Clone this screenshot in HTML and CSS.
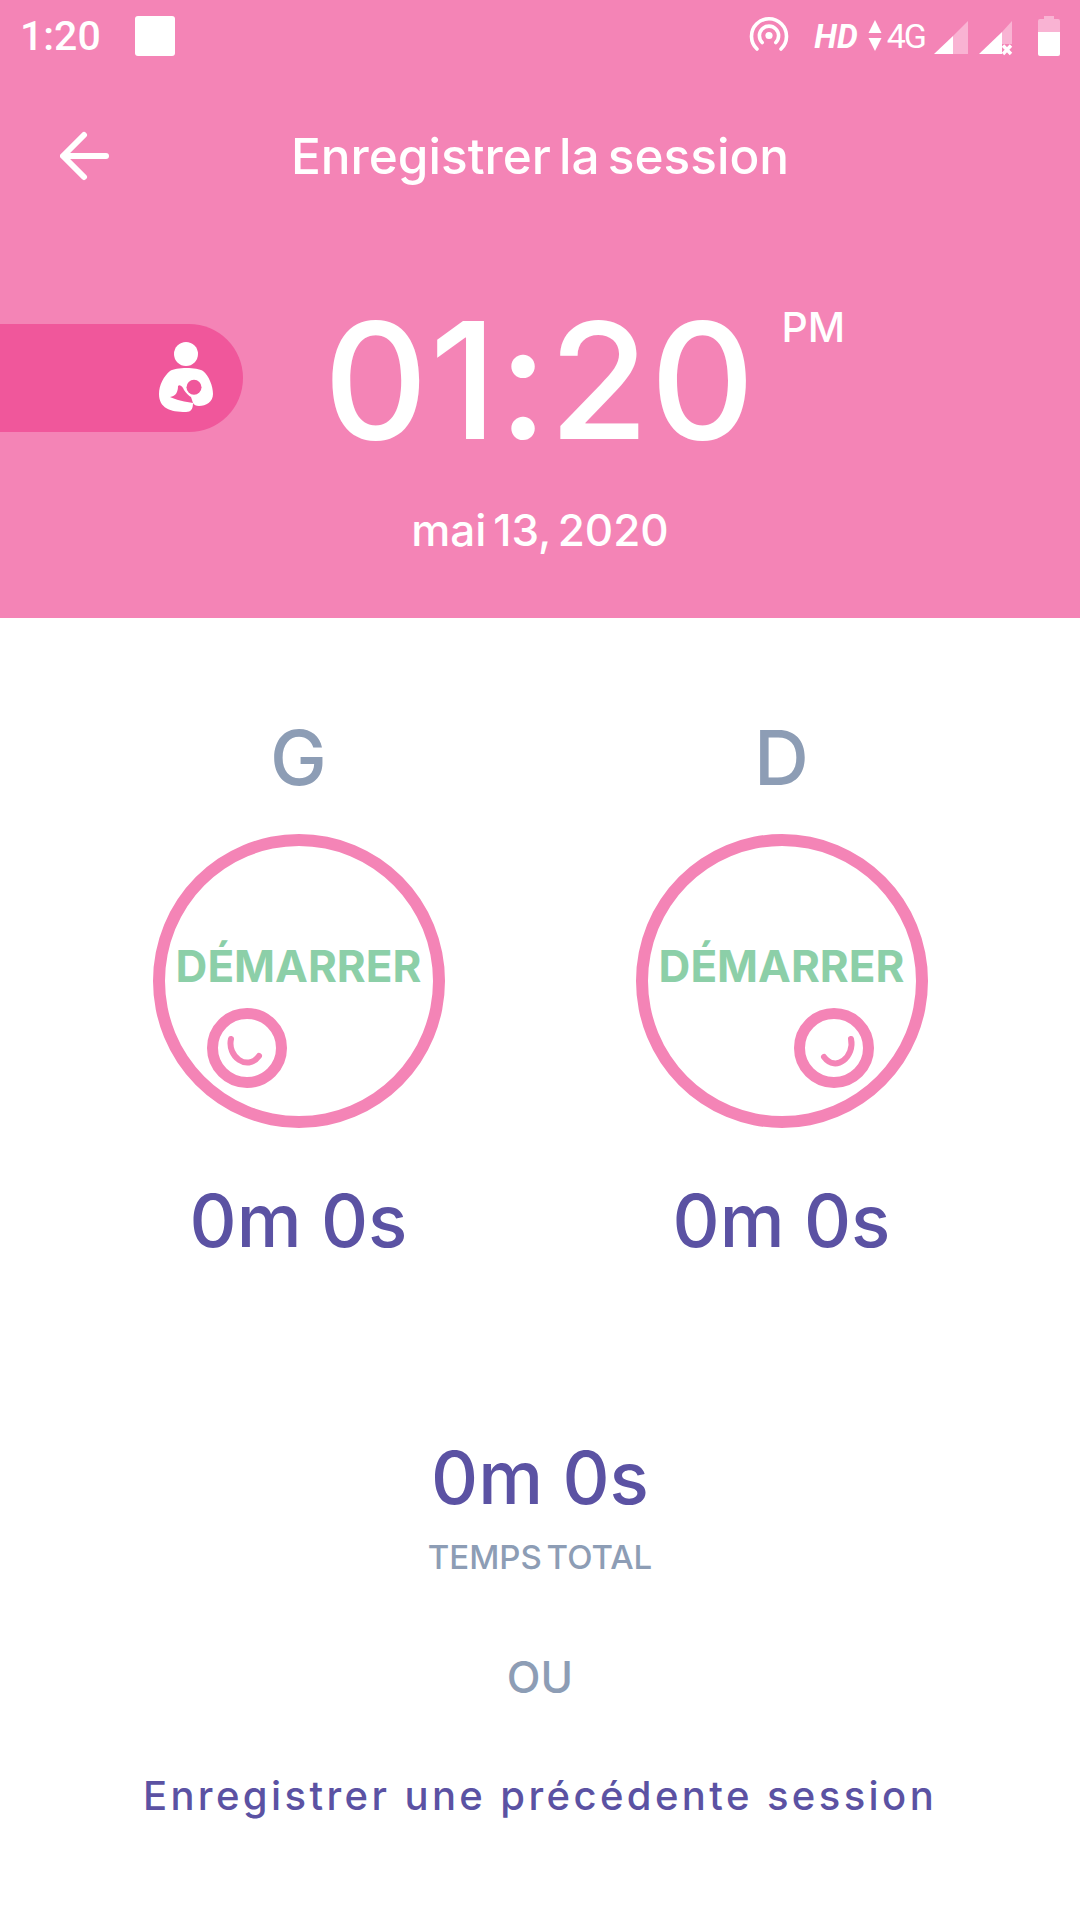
FILE: index.html
```html
<!DOCTYPE html>
<html lang="fr">
<head>
  <meta charset="UTF-8" />
  <meta name="viewport" content="width=device-width, initial-scale=1.0"/>
  <title>Enregistrer la session</title>
  <link rel="stylesheet" href="styles.css">
</head>
<body>
  <header class="header">
    <div class="status">
      <span class="clock">1:20</span>
      <span class="notif"></span>
      <span class="status-right">
        <svg class="hotspot" width="40" height="40" viewBox="0 0 40 40" fill="none" stroke="#fff" stroke-width="3.6" stroke-linecap="round">
          <path d="M8 33A17.5 17.5 0 1 1 32 33"/>
          <path d="M13.2 26.5A9.6 9.6 0 1 1 26.8 26.5"/>
          <circle cx="20" cy="19.5" r="3.6" fill="#fff" stroke="none"/>
        </svg>
        <span class="hd">HD</span>
        <svg class="updown" width="14" height="32" viewBox="0 0 14 32" fill="#fff">
          <path d="M7 0L13.5 13H.5z"/>
          <path d="M.5 18h13L7 31z"/>
        </svg>
        <span class="net">4G</span>
        <svg class="signal" width="35" height="35" viewBox="0 0 35 35">
          <path d="M34 0V33H19V15z" fill="#f9b3d3"/>
          <path d="M0 33L19 15V33z" fill="#fff"/>
        </svg>
        <svg class="signal two" width="35" height="35" viewBox="0 0 35 35">
          <path d="M33 0L23 11V23H33z" fill="#f9b3d3"/>
          <path d="M0 33L23 11V33z" fill="#fff"/>
          <path d="M24 24.500L32 33M32 24.500L24 33" stroke="#fff" stroke-width="3.4"/>
        </svg>
        <svg class="battery" width="24" height="40" viewBox="0 0 24 40">
          <path d="M7 0h10v3h4a2 2 0 0 1 2 2v12H1V5a2 2 0 0 1 2-2h4z" fill="#f9b3d3"/>
          <path d="M1 16h22v22a2 2 0 0 1-2 2H3a2 2 0 0 1-2-2z" fill="#fff"/>
        </svg>
      </span>
    </div>

    <div class="toolbar">
      <svg class="back" width="50" height="50" viewBox="0 0 50 50" fill="none" stroke="#fff" stroke-width="6" stroke-linecap="round" stroke-linejoin="round">
        <path d="M24 4L3 25L24 46"/>
        <path d="M4 25H46"/>
      </svg>
      <h1>Enregistrer la session</h1>
    </div>

    <div class="time-row">
      <div class="pill">
        <svg width="60" height="72" viewBox="0 0 60 72" fill="#fff">
          <circle cx="30" cy="12" r="12"/>
          <path d="M14 29C20 25 41 25 47 29C53 34 57 44 57 52C57 60 50 64 43 64C40 64 38 63 37 61C37 67 35 70 30 70C14 70 3 66 3 52C3 43 8 34 14 29z"/>
          <circle cx="38" cy="45.300" r="7.500" fill="#f0579b"/>
          <path d="M14 55C20 54 22 50 22 44C24 42 27 45 28 48C30 51 33 54 35 55L37 61C30 60 20 58 14 55z" fill="#f0579b"/>
        </svg>
      </div>
      <div class="time">01:20</div>
      <div class="ampm">PM</div>
    </div>
    <div class="date">mai 13, 2020</div>
  </header>

  <main class="main">
    <div class="sides">
      <div class="side">
        <div class="letter">G</div>
        <div class="ring">
          <span class="start">DÉMARRER</span>
          <svg class="face left" width="80" height="80" viewBox="0 0 80 80" fill="none" stroke="#f484b6">
            <circle cx="40" cy="40" r="34.500" stroke-width="11"/>
            <path d="M24 31C20 48 40 64 52 48" stroke-width="6" stroke-linecap="round"/>
          </svg>
        </div>
        <div class="duration">0m 0s</div>
      </div>
      <div class="side">
        <div class="letter">D</div>
        <div class="ring">
          <span class="start">DÉMARRER</span>
          <svg class="face right" width="80" height="80" viewBox="0 0 80 80" fill="none" stroke="#f484b6">
            <circle cx="40" cy="40" r="34.500" stroke-width="11"/>
            <path d="M57 31C61 48 42 65 30 49" stroke-width="6" stroke-linecap="round"/>
          </svg>
        </div>
        <div class="duration">0m 0s</div>
      </div>
    </div>

    <div class="total">
      <div class="duration">0m 0s</div>
      <div class="total-label">TEMPS TOTAL</div>
    </div>
    <div class="or">OU</div>
    <a class="previous">Enregistrer une précédente session</a>
  </main>
</body>
</html>
```

FILE: styles.css
```css
* {
  box-sizing: border-box;
}
body {
  margin: 0;
  width: 1080px;
  height: 1920px;
  overflow: hidden;
  background: #fff;
  font-family: "Inter", "Noto Sans", sans-serif;
}
.header {
  height: 618px;
  background: #f484b6;
  color: #fff;
}
.status {
  height: 72px;
  display: flex;
  align-items: center;
  padding: 0 19px 0 20px;
}
.clock {
  font-family: Roboto, sans-serif;
  font-size: 41px;
  font-weight: 500;
}
.notif {
  width: 40px;
  height: 40px;
  margin-left: 34px;
  background: #fff;
  border-radius: 3px;
}
.status-right {
  margin-left: auto;
  display: flex;
  align-items: center;
}
.hd {
  font-family: Roboto, sans-serif;
  font-style: italic;
  font-weight: 700;
  font-size: 33px;
  margin-left: 25px;
}
.updown {
  margin-left: 10px;
}
.net {
  font-family: Roboto, sans-serif;
  font-size: 34px;
  letter-spacing: -2px;
  margin-left: 5px;
}
.signal {
  margin-left: 9px;
  margin-top: 4px;
}
.signal.two {
  margin-left: 10px;
}
.battery {
  margin-left: 23px;
}
.toolbar {
  height: 168px;
  display: flex;
  align-items: center;
  position: relative;
  padding-left: 60px;
}
.toolbar h1 {
  position: absolute;
  left: 0;
  right: 0;
  margin: 0;
  text-align: center;
  font-size: 49.5px;
  font-weight: 500;
  word-spacing: -5px;
}
.time-row {
  display: grid;
  grid-template-columns: 1fr auto 1fr;
  align-items: center;
  margin-top: 81px;
  height: 108px;
}
.pill {
  width: 243px;
  height: 108px;
  background: #f0579b;
  border-radius: 0 54px 54px 0;
  display: flex;
  align-items: center;
  justify-content: flex-end;
  padding-right: 27px;
}
.time {
  font-size: 162px;
  font-weight: 500;
  letter-spacing: 1.5px;
  line-height: 108px;
  margin-top: 5px;
}
.ampm {
  align-self: start;
  font-size: 41px;
  font-weight: 500;
  margin-left: 25px;
  margin-top: -19px;
}
.date {
  text-align: center;
  font-size: 44px;
  font-weight: 500;
  word-spacing: -5px;
  margin-top: 74px;
}
.sides {
  display: grid;
  grid-template-columns: 1fr 1fr;
  padding: 0 57px;
  margin-top: 96px;
}
.side {
  display: flex;
  flex-direction: column;
  align-items: center;
}
.letter {
  font-size: 76px;
  font-weight: 500;
  line-height: 86px;
  color: #8d9db5;
}
.ring {
  position: relative;
  width: 292px;
  height: 294px;
  margin-top: 34px;
  border: 12px solid #f484b6;
  border-radius: 50%;
  display: flex;
  justify-content: center;
}
.start {
  margin-top: 93px;
  font-size: 44px;
  font-weight: 700;
  color: #8ccfa8;
}
.face {
  position: absolute;
  top: 162px;
}
.face.left {
  left: 42px;
}
.face.right {
  left: 146px;
}
.duration {
  font-size: 73px;
  font-weight: 500;
  color: #5b52a3;
  line-height: 86px;
}
.side .duration {
  margin-top: 50px;
}
.total {
  margin-top: 171px;
  text-align: center;
}
.total-label {
  font-size: 33px;
  font-weight: 500;
  word-spacing: -4px;
  color: #8d9db5;
  margin-top: 16px;
}
.or {
  text-align: center;
  font-size: 44px;
  font-weight: 500;
  color: #8d9db5;
  margin-top: 73px;
}
.previous {
  display: block;
  text-align: center;
  font-size: 40px;
  font-weight: 500;
  letter-spacing: 3.4px;
  color: #5b52a3;
  margin-top: 67px;
}
```
